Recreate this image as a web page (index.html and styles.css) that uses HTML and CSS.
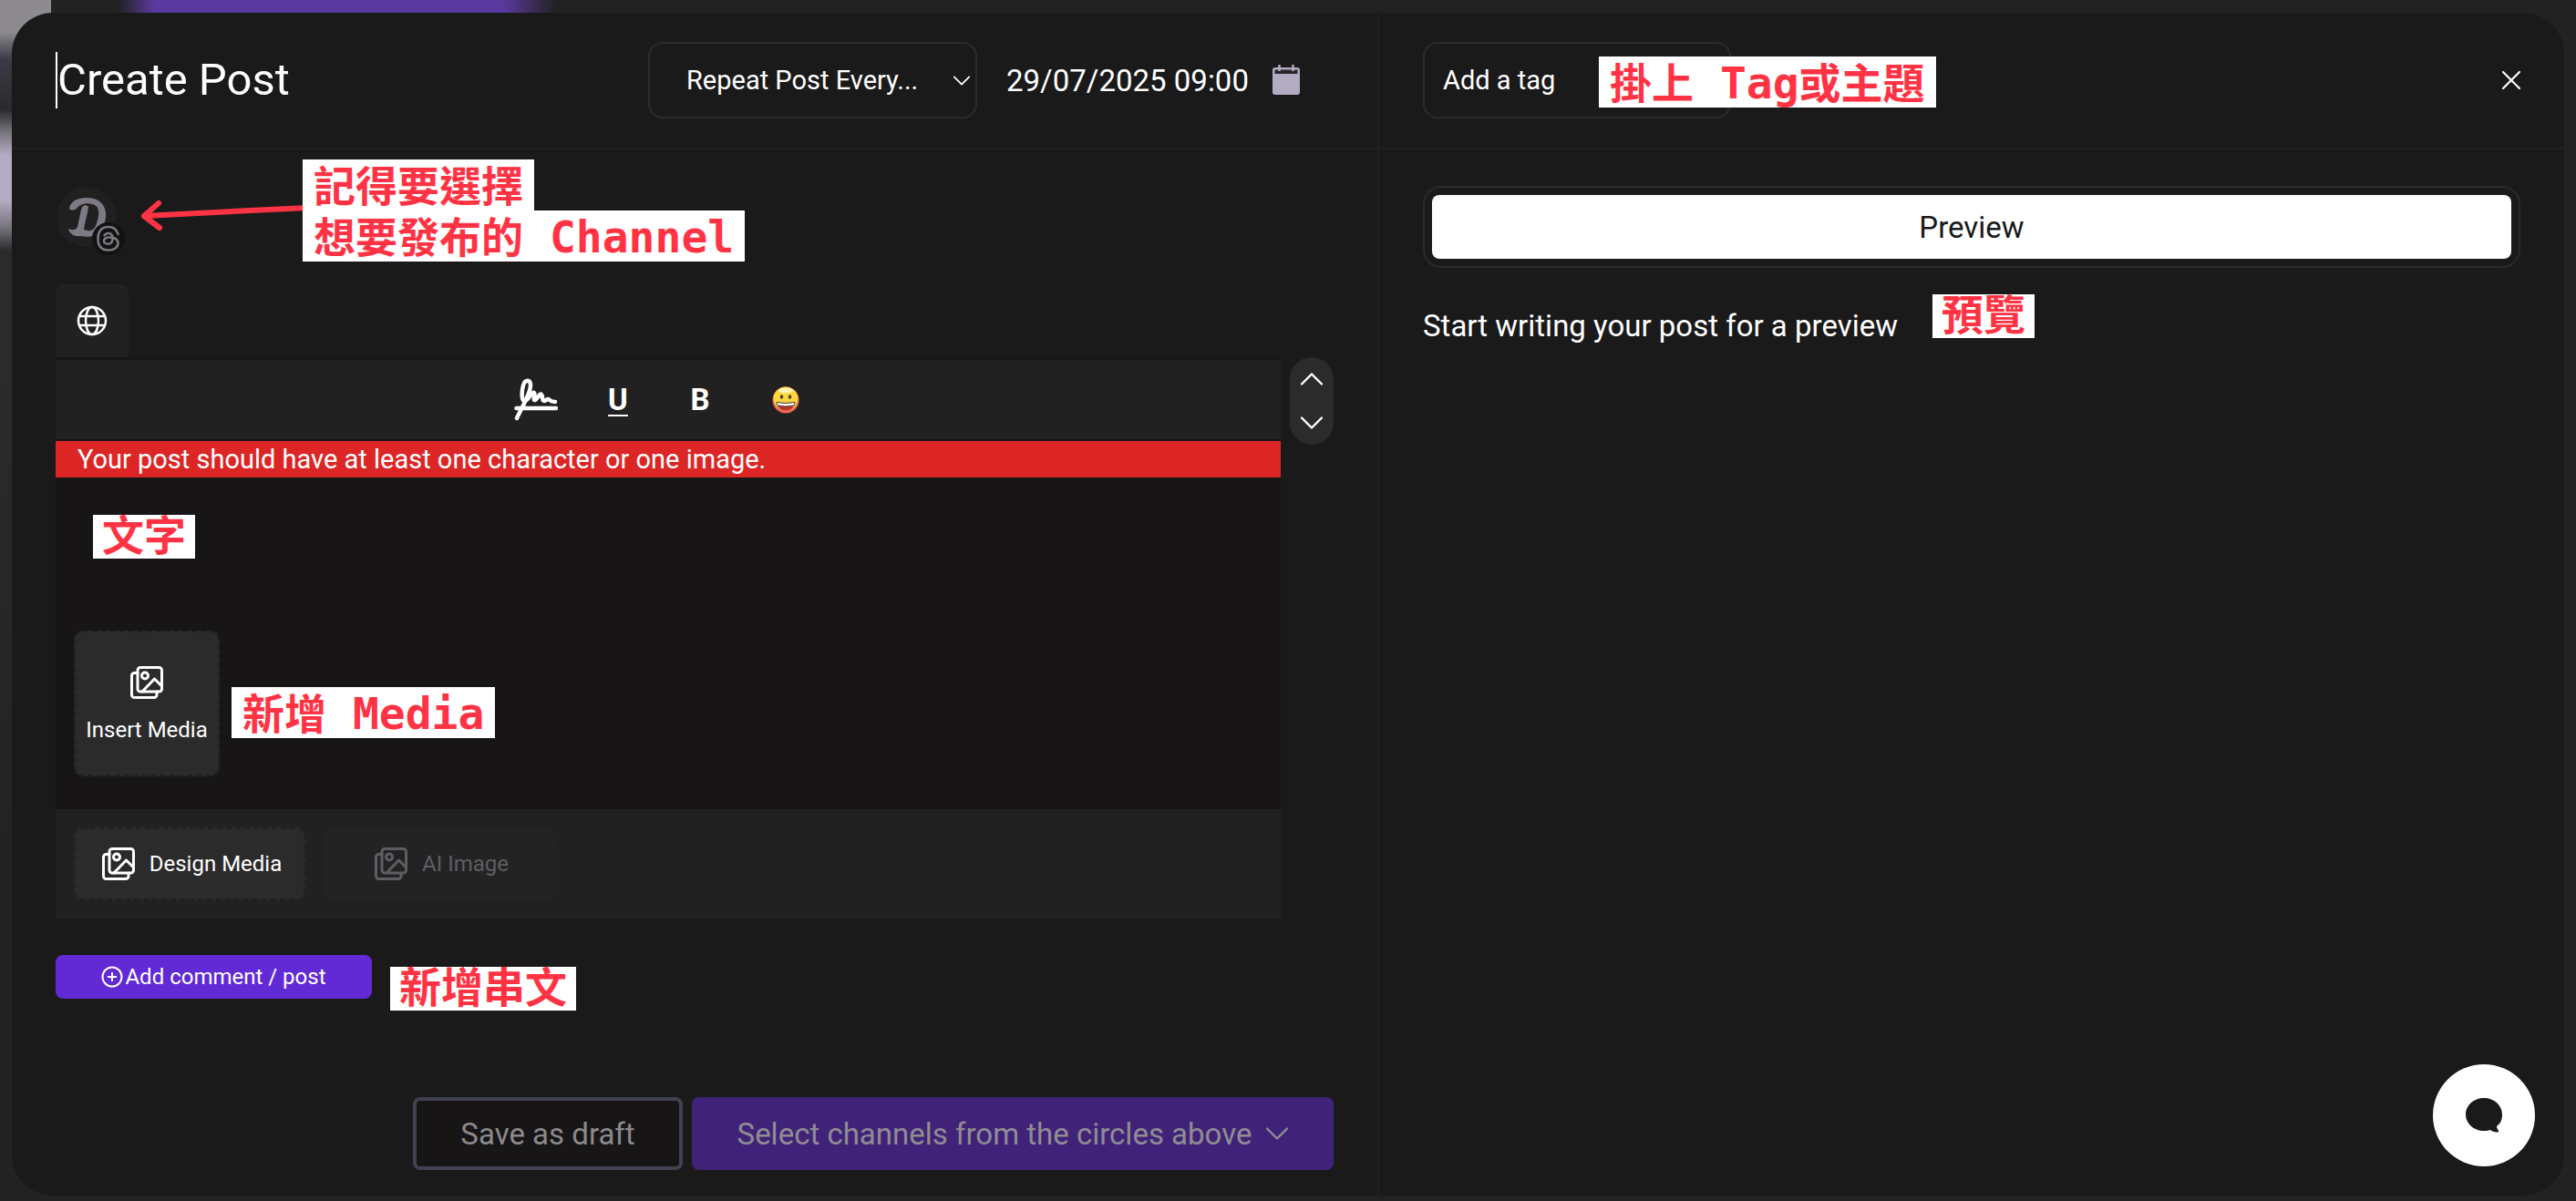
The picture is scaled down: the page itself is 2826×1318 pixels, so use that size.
FILE: index.html
```html
<!DOCTYPE html>
<html lang="en">
<head>
<meta charset="utf-8">
<meta name="viewport" content="width=device-width, initial-scale=1">
<title>Create Post</title>
<link rel="stylesheet" href="styles.css">
</head>
<body>
<svg class="defs" aria-hidden="true">
  <symbol id="media" viewBox="0 0 36 36"><g fill="none" stroke="currentColor" stroke-width="3" stroke-linejoin="round" stroke-linecap="round"><rect x="8" y="1.500" width="26.500" height="26.500" rx="3"/><path d="M8 7.500H4.500a3 3 0 0 0-3 3v21a3 3 0 0 0 3 3H26a3 3 0 0 0 3-3V28"/><circle cx="16" cy="10.500" r="3.500"/><path d="M13 28 26.500 14l8 8"/></g></symbol>
  <symbol id="down" viewBox="0 0 24 14"><path d="M1 1.500 12 12.500 23 1.500" fill="none" stroke="currentColor" stroke-width="2.400" stroke-linecap="round" stroke-linejoin="round"/></symbol>
</svg>
<main class="modal">
  <section class="pane compose">
    <header class="bar">
      <h1 class="title">Create Post</h1>
      <div class="schedule">
        <div class="repeat">
          <select class="field repeat-select" aria-label="Repeat post"><option>Repeat Post Every...</option></select>
          <svg class="repeat-arrow" aria-hidden="true"><use href="#down"/></svg>
        </div>
        <div class="date">
          <input class="date-input" type="text" value="29/07/2025 09:00" aria-label="Publish date">
          <button class="icon-button" aria-label="Open calendar">
            <svg width="30" height="34" viewBox="0 0 30 34"><rect y="3" width="30" height="30" rx="3" fill="#b3abc0"/><path d="M2.500 5.500h25V10h-25z" fill="#29262c"/><path d="M7.500 0v7M22.500 0v7" stroke="#b3abc0" stroke-width="2.500"/></svg>
          </button>
        </div>
      </div>
    </header>
    <div class="body">
      <div class="channels">
        <button class="channel" aria-label="Threads channel">
          <svg width="76" height="76" viewBox="0 0 76 76">
            <circle cx="34" cy="34" r="33" fill="#202020"/>
            <path transform="translate(-3 -2)" d="M18 27c1-10 14-14 27-11 14 4 16 19 10 31-5 11-15 12-26 10-6 1-11-3-12-8 4 2 8 2 10-2l4-19c1-5 6-6 8-3-1 9-4 16-5 25 8 3 12 0 14-7 4-12 3-19-5-21-8-2-14 1-17 5-3 2-7 2-8 0z" fill="#7e7983"/>
            <circle cx="58" cy="58" r="18" fill="#131213"/>
            <path d="M68.500 53c-1.500-5-5-8-10.500-8-8 0-11.500 5-11.500 13s4 12.500 11.500 12.500c6 0 10.500-3 10.500-7.500 0-5.500-6.500-7-10.500-6.500-3 .3-5 1.800-5 4 0 2 2 3.200 4.300 3.200 3.700 0 5.200-2.500 5.200-6.200 0-3.500-1.500-5.500-4.500-5.500-2 0-3.500.8-4.500 2.300" fill="none" stroke="#7e7983" stroke-width="2.500" stroke-linecap="round"/>
          </svg>
        </button>
        <div class="note note-channel" lang="zh-Hant">
          <svg class="arrow" width="180" height="40" viewBox="0 0 180 40" aria-hidden="true"><path d="M183 11 6 20M22 6 6 20l17 13" fill="none" stroke="#ff3344" stroke-width="6" stroke-linecap="round" stroke-linejoin="round"/></svg>
          <span class="tag tall">記得要選擇</span>
          <span class="tag tall">想要發布的<span class="mono"> Channel</span></span>
        </div>
      </div>
      <button class="tab" aria-label="All channels">
        <svg width="34" height="34" viewBox="0 0 34 34" fill="none" stroke="#fff" stroke-width="2.500"><circle cx="17" cy="17" r="15"/><ellipse cx="17" cy="17" rx="7" ry="15"/><path d="M3 12h28M3 22h28"/></svg>
      </button>
      <div class="editor-row">
        <div class="editor">
          <div class="toolbar">
            <button class="tool" aria-label="Signature"><svg width="48" height="48" viewBox="0 0 48 48" fill="none" stroke="#fff" stroke-width="4.500" stroke-linecap="round" stroke-linejoin="round"><path d="M3 44C8 33 18 17 18 8c0-7-6-7-8 0-2 7-2 18 2 17 4-1 8-11 10-9 2 2-2 9 1 8 3-1 5-8 7-6 2 2 0 7 3 7 2 0 3-2 4-2 2 0 2 3 8 3M2.500 33H46"/></svg></button>
            <button class="tool underline" aria-label="Underline"><u>U</u></button>
            <button class="tool" aria-label="Bold">B</button>
            <button class="tool emoji" aria-label="Emoji"><svg width="30" height="30" viewBox="0 0 30 30"><circle cx="15" cy="15" r="14.500" fill="#f2664f"/><ellipse cx="15" cy="13.500" rx="13.500" ry="13" fill="#fcd53f"/><ellipse cx="15" cy="4.500" rx="8" ry="3" fill="#fff3b8"/><ellipse cx="10.500" cy="11.500" rx="1.700" ry="2.300" fill="#4a3b38"/><ellipse cx="19.500" cy="11.500" rx="1.700" ry="2.300" fill="#4a3b38"/><path d="M5 17.500q10 2 20 0c0 5-4 9-10 9s-10-4-10-9z" fill="#b5362f"/><path d="M5 17.500q10 2 20 0 0 2-1 3.500-9 2-18 0-1-1.500-1-3.500z" fill="#fff" stroke="#4a3b38" stroke-width="1"/></svg></button>
          </div>
          <p class="error" role="alert">Your post should have at least one character or one image.</p>
          <div class="content">
            <textarea class="text" aria-label="Post text"></textarea>
            <span class="note note-text tag" lang="zh-Hant">文字</span>
            <div class="media-row">
              <button class="insert"><svg class="media-icon" aria-hidden="true"><use href="#media"/></svg>Insert Media</button>
              <span class="note note-media tag tall" lang="zh-Hant">新增<span class="mono"> Media</span></span>
            </div>
          </div>
          <div class="actions">
            <button class="action"><svg class="media-icon" aria-hidden="true"><use href="#media"/></svg>Design Media</button>
            <button class="action muted" disabled><svg class="media-icon" aria-hidden="true"><use href="#media"/></svg>AI Image</button>
          </div>
        </div>
        <div class="mover">
          <button class="icon-button" aria-label="Move up"><svg class="chevron flip" aria-hidden="true"><use href="#down"/></svg></button>
          <button class="icon-button" aria-label="Move down"><svg class="chevron" aria-hidden="true"><use href="#down"/></svg></button>
        </div>
      </div>
      <div class="add-row">
        <button class="add"><svg width="24" height="24" viewBox="0 0 24 24" fill="none" stroke="#fff" stroke-width="2" aria-hidden="true"><circle cx="12" cy="12" r="10.500"/><path d="M12 7v10M7 12h10"/></svg>Add comment / post</button>
        <span class="note note-thread tag" lang="zh-Hant">新增串文</span>
      </div>
      <footer class="footer">
        <button class="draft" disabled>Save as draft</button>
        <button class="submit" disabled>Select channels from the circles above <svg class="chevron" aria-hidden="true"><use href="#down"/></svg></button>
      </footer>
    </div>
  </section>
  <section class="pane preview">
    <header class="bar">
      <div class="tag-box">
        <input class="field tag-input" type="text" placeholder="Add a tag" aria-label="Add a tag">
        <span class="note note-tag tag tall" lang="zh-Hant">掛上<span class="mono"> Tag</span>或主題</span>
      </div>
      <button class="icon-button" aria-label="Close"><svg width="20" height="20" viewBox="0 0 20 20"><path d="M1 1l18 18M19 1 1 19" stroke="#fff" stroke-width="2.200" stroke-linecap="round"/></svg></button>
    </header>
    <div class="body">
      <div class="tabs"><button class="preview-tab">Preview</button></div>
      <p class="hint">Start writing your post for a preview<span class="note note-preview tag" lang="zh-Hant">預覽</span></p>
    </div>
  </section>
</main>
<button class="chat" aria-label="Open chat"><svg width="40" height="38" viewBox="0 0 40 38"><path d="M20 0c11 0 20 8 20 18 0 6-2 10-6 13 0 2 1 3 2 4.500.5 1.500 0 2-2 2-3 0-5-1-7-2.500C24 36 22 36 20 36 9 36 0 28 0 18S9 0 20 0z" fill="#1a1a1a"/></svg></button>
</body>
</html>
```
FILE: styles.css
```css
* { box-sizing: border-box; }
body {
  margin: 0;
  min-height: 100vh;
  padding: 14px 13px 6px;
  display: flex;
  font-family: Roboto, "Noto Sans CJK TC", sans-serif;
  font-size: 29px;
  color: #fff;
  background:
    linear-gradient(90deg, transparent 130px, #5b3aa0 170px, #5b3aa0 550px, transparent 610px) 0 0 / 100% 14px no-repeat,
    linear-gradient(#8d8b90 0, #8d8b90 35px, #3c3a44 65px, #2a2a2e 120px, #77737c 145px, #b3abc2 170px, #b3abc2 220px, #77737c 250px, #2b2b2e 275px, #2b2b2b 400px, #222 1000px) 0 0 / 56px 100% no-repeat,
    #222;
}
button, input, select, textarea { font: inherit; color: inherit; }
button { border: 0; padding: 0; background: none; display: flex; align-items: center; justify-content: center; }
svg { display: block; flex: none; }
h1, p { margin: 0; font-weight: 400; }
.defs { position: absolute; width: 0; height: 0; }

.modal {
  flex: 1;
  display: grid;
  grid-template-columns: minmax(0, 15fr) minmax(0, 13fr);
  background: #1a1a1a;
  border-radius: 45px;
}
.pane { display: flex; flex-direction: column; }
.compose { border-right: 2px solid #212121; }
.bar {
  height: 150px;
  padding: 0 48px;
  display: flex;
  align-items: center;
  justify-content: space-between;
  border-bottom: 2px solid #212121;
}
.body { flex: 1; padding: 40px 48px 28px; display: flex; flex-direction: column; }

.title { font-size: 49px; line-height: 62px; border-left: 2px solid #fff; }
.schedule { display: flex; align-items: center; gap: 32px; padding-right: 37px; }
.field { height: 84px; border: 2px solid #2b2b2b; border-radius: 16px; background: #1a1a1a; }
.repeat { position: relative; }
.repeat-select { appearance: none; width: 361px; padding: 0 40px; }
.repeat-arrow { position: absolute; right: 8px; top: 37px; width: 18px; height: 11px; }
.date { display: flex; align-items: center; gap: 20px; }
.date-input { width: 272px; padding: 0; border: 0; background: none; font-size: 33px; }

.channels { position: relative; height: 68px; }
.channel { width: 76px; height: 76px; }
.tab { width: 80px; height: 80px; margin-top: 40px; background: #212121; border-radius: 8px 8px 0 0; }

.editor-row { display: flex; align-items: flex-start; gap: 10px; }
.editor { flex: 1; background: #171516; border-top: 3px solid #171516; }
.toolbar {
  height: 87px;
  padding-right: 12px;
  display: flex;
  align-items: center;
  justify-content: center;
  gap: 42px;
  background: #212121;
}
.tool { width: 48px; height: 48px; font-size: 33px; font-weight: 700; }
.underline u { text-decoration-thickness: 2px; text-underline-offset: 5px; }
.emoji { width: 56px; }
.error { margin-top: 2px; padding: 0 24px; line-height: 40px; background: #dc2626; }
.content { position: relative; padding-bottom: 36px; }
.text { display: block; width: 100%; height: 168px; padding: 20px; border: 0; resize: none; background: none; }
.media-row { position: relative; padding-left: 20px; }
.insert {
  width: 160px;
  height: 160px;
  padding-top: 2px;
  flex-direction: column;
  gap: 20px;
  font-size: 24px;
  line-height: 28px;
  background: #2b2b2b;
  border: 2px dashed #212121;
  border-radius: 10px;
}
.media-icon { width: 36px; height: 36px; }
.actions { display: flex; gap: 20px; padding: 20px; background: #212121; }
.action {
  width: 254px;
  height: 80px;
  padding-left: 5px;
  gap: 16px;
  font-size: 24px;
  background: #2b2b2b;
  border: 2px dashed #212121;
  border-radius: 8px;
}
.muted { color: #5f5d64; background: #232323; }
.mover {
  width: 48px;
  height: 96px;
  padding: 17px 0;
  display: flex;
  flex-direction: column;
  align-items: center;
  justify-content: space-between;
  background: #2b2b2b;
  border-radius: 24px;
}
.chevron { width: 24px; height: 14px; }
.flip { transform: rotate(180deg); }

.add-row { position: relative; margin-top: 40px; }
.add { width: 347px; height: 48px; gap: 2px; font-size: 24px; background: #612ad5; border-radius: 8px; }
.footer { margin-top: auto; padding-top: 40px; display: flex; justify-content: flex-end; gap: 10px; font-size: 33px; }
.draft { width: 296px; height: 80px; color: #8b8a8b; background: #171516; border: 4px solid #3f4250; border-radius: 8px; }
.submit { width: 704px; height: 80px; gap: 16px; color: #8f8c92; background: #402379; border-radius: 8px; }

.tag-box { position: relative; }
.tag-input { display: block; width: 338px; padding: 0 20px; }
.tag-input::placeholder { color: #fff; opacity: 1; }
.tabs { padding: 8px; border: 2px solid #2b2b2b; border-radius: 20px; }
.preview-tab { width: 100%; height: 70px; font-size: 33px; color: #1a1a1a; background: #fff; border-radius: 8px; }
.hint { position: relative; margin-top: 44px; font-size: 33px; line-height: 40px; }

/* Red-on-white callouts laid over the form */
.note { position: absolute; }
.tag {
  display: block;
  width: max-content;
  height: 48px;
  padding: 0 10px;
  font-family: "Noto Sans CJK TC", sans-serif;
  font-size: 46px;
  font-weight: 700;
  line-height: 38px;
  color: #ff3344;
  background: #fff;
  white-space: pre;
}
.tall { height: 56px; padding: 0 12px; line-height: 52px; }
.mono { font-family: "DejaVu Sans Mono", monospace; font-size: 48px; line-height: 38px; }
.note-channel { left: 271px; top: -29px; }
.arrow { position: absolute; right: 100%; top: 42px; }
.note-text { left: 41px; top: 41px; }
.note-media { left: 193px; top: 62px; }
.note-thread { left: 367px; top: 13px; }
.note-tag { left: 193px; top: 16px; }
.note-preview { left: 559px; top: -15px; }

.chat {
  position: fixed;
  right: 45px;
  bottom: 38px;
  width: 112px;
  height: 112px;
  background: #fff;
  border-radius: 50%;
}
```
